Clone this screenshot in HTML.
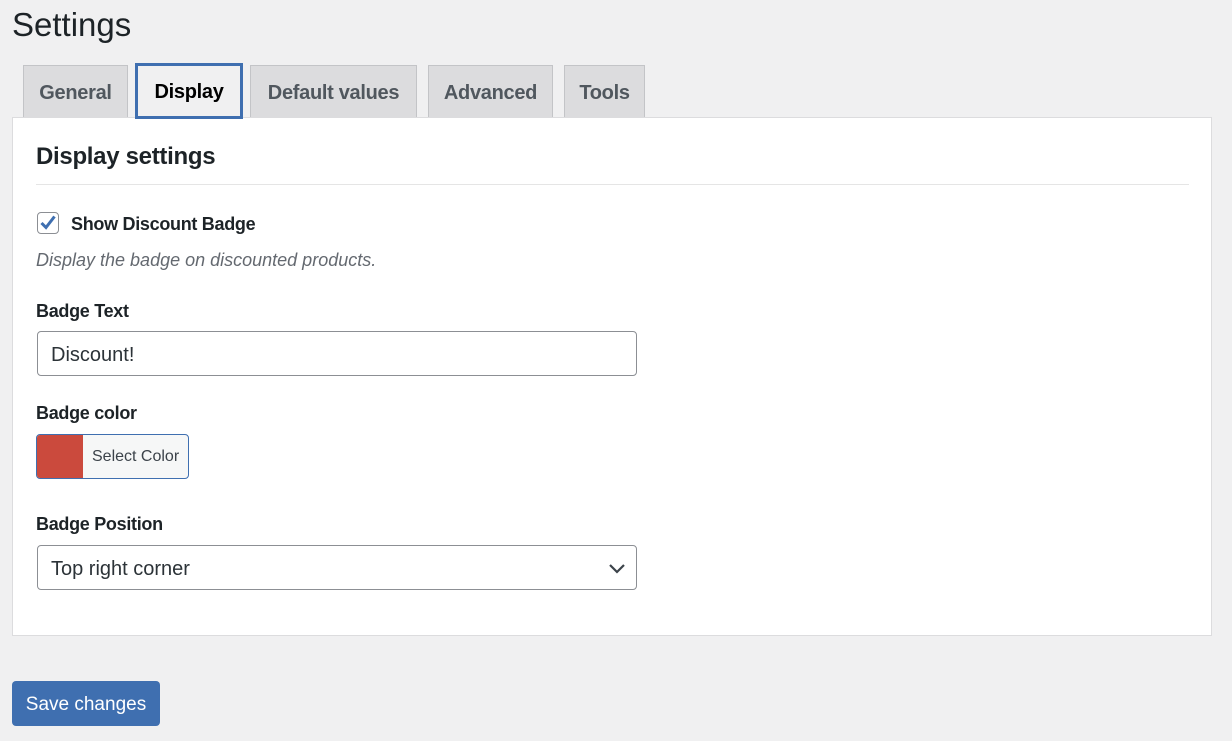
<!DOCTYPE html>
<html><head><style>
*{box-sizing:border-box;margin:0;padding:0}
body{width:1232px;height:741px;background:#f0f0f1;font-family:"Liberation Sans",sans-serif;color:#1d2327;position:relative;overflow:hidden}
.a{position:absolute}
h1{position:absolute;left:12px;top:6px;font-size:33px;font-weight:400;color:#1d2327}
.tab{position:absolute;top:65px;height:53px;background:#dcdcde;border:1px solid #c3c4c7;border-bottom:none;font-size:20px;font-weight:bold;color:#50575e;text-align:center;line-height:55px;letter-spacing:-0.3px}
.tab.on{background:#f0f0f1;border:3px solid #3f6fb0;color:#000;line-height:53px;height:56px;top:63px;z-index:2}
.panel{left:12px;top:117px;width:1200px;height:519px;background:#fff;border:1px solid #dcdcde}
.lbl{font-size:18px;font-weight:bold;color:#1d2327;letter-spacing:-0.3px}
.box{border:1px solid #8c8f94;border-radius:4px;background:#fff;font-size:20px;color:#2c3338;padding-left:13px;line-height:46px}
</style></head><body>
<h1>Settings</h1>
<div class="tab" style="left:23px;width:105px">General</div>
<div class="tab on" style="left:135px;width:108px">Display</div>
<div class="tab" style="left:250px;width:167px">Default values</div>
<div class="tab" style="left:428px;width:125px">Advanced</div>
<div class="tab" style="left:564px;width:81px">Tools</div>
<div class="a panel"></div>
<div class="a" style="left:36px;top:143px;font-size:24px;font-weight:bold;letter-spacing:-0.3px">Display settings</div>
<div class="a" style="left:36px;top:184px;width:1153px;height:1px;background:#e5e5e5"></div>
<div class="a" style="left:37px;top:212px;width:22px;height:22px;border:1px solid #8c8f94;border-radius:4px;background:#fff">
<svg width="20" height="20" viewBox="0 0 20 20" style="position:absolute;left:0;top:0"><path d="M3.5 10l4.5 4.5 8.5-11" fill="none" stroke="#3f6fb0" stroke-width="3"/></svg></div>
<div class="a lbl" style="left:71px;top:214px">Show Discount Badge</div>
<div class="a" style="left:36px;top:250px;font-size:18px;font-style:italic;color:#646970">Display the badge on discounted products.</div>
<div class="a lbl" style="left:36px;top:301px">Badge Text</div>
<div class="a box" style="left:37px;top:331px;width:600px;height:45px">Discount!</div>
<div class="a lbl" style="left:36px;top:403px">Badge color</div>
<div class="a" style="left:36px;top:434px;width:153px;height:45px;border:1px solid #3f6fb0;border-radius:4px;background:#f6f7f7;overflow:hidden">
<div class="a" style="left:0;top:0;width:46px;height:43px;background:#cb4a3d"></div>
<div class="a" style="left:55px;top:13px;font-size:16px;color:#3c434a">Select Color</div></div>
<div class="a lbl" style="left:36px;top:514px">Badge Position</div>
<div class="a box" style="left:37px;top:545px;width:600px;height:45px">Top right corner
<svg width="18" height="12" viewBox="0 0 18 12" style="position:absolute;right:10px;top:17px"><path d="M2 2l7 7 7-7" fill="none" stroke="#3c434a" stroke-width="2.2"/></svg></div>
<div class="a" style="left:12px;top:681px;width:148px;height:45px;background:#3f6fb0;border-radius:4px;color:#fff;font-size:19px;text-align:center;line-height:47px">Save changes</div>
</body></html>
